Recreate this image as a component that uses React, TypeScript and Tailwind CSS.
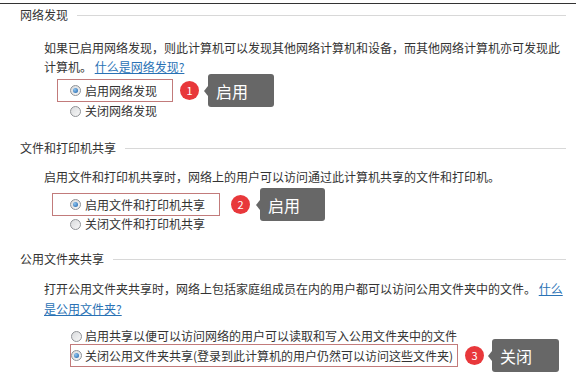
import React from 'react';

const Radio: React.FC<{ checked?: boolean }> = ({ checked = false }) => (
  <span className="relative inline-flex h-[11px] w-[11px] shrink-0 items-center justify-center rounded-full border border-[#8f9296] bg-[linear-gradient(135deg,#d9dbdd,#f7f7f7)]">
    {checked && (
      <span className="h-[5px] w-[5px] rounded-full bg-[radial-gradient(circle_at_35%_35%,#8cc4f0,#1c5fa6)]" />
    )}
  </span>
);

const Heading: React.FC<{ title: string }> = ({ title }) => (
  <div className="flex h-5 items-center pl-5 pr-[10px]">
    <span className="leading-5">{title}</span>
    <div className="ml-[9px] h-px flex-1 bg-[#d8d8d8]" />
  </div>
);

const Badge: React.FC<{ n: number; className?: string }> = ({ n, className = '' }) => (
  <span
    className={`flex h-[19px] w-[19px] shrink-0 items-center justify-center rounded-full bg-[#e8383b] text-[11px] leading-none text-white ${className}`}
  >
    {n}
  </span>
);

const Tip: React.FC<{ text: string; width: string; className?: string }> = ({ text, width, className = '' }) => (
  <div className={`flex shrink-0 items-center ${className}`}>
    <span className="h-0 w-0 border-y-[5px] border-r-[4px] border-y-transparent border-r-[#676767]" />
    <div className={`flex h-[33px] ${width} items-center rounded-[3px] bg-[#676767] pl-[8px] text-[16px] text-white`}>
      {text}
    </div>
  </div>
);

export default function App() {
  return (
    <div className="h-[378px] w-[576px] overflow-hidden bg-white font-['Noto_Sans_CJK_SC',sans-serif] text-[12px] text-[#333]">
      <div className="mt-[3px] h-px bg-[#333]" />

      {/* 网络发现 */}
      <div className="mt-px">
        <Heading title="网络发现" />
      </div>
      <p className="mt-[13px] whitespace-nowrap pl-[44px] leading-[19px]">
        如果已启用网络发现，则此计算机可以发现其他网络计算机和设备，而其他网络计算机亦可发现此
        <br />
        计算机。 <span className="text-[#2a72b5] underline">什么是网络发现?</span>
      </p>
      <div className="mt-[3px] flex h-[23px] items-center">
        <div className="ml-[57px] flex h-full w-[116px] items-center border border-[#c27b7b] pl-[12px]">
          <Radio checked />
          <span className="ml-[4px]">启用网络发现</span>
        </div>
        <Badge n={1} className="ml-[7px]" />
        <Tip text="启用" width="w-[66px]" className="ml-[5px]" />
      </div>
      <div className="flex h-[18px] items-center pl-[70px]">
        <Radio />
        <span className="ml-[4px]">关闭网络发现</span>
      </div>

      {/* 文件和打印机共享 */}
      <div className="mt-[18px]">
        <Heading title="文件和打印机共享" />
      </div>
      <p className="mt-[9px] whitespace-nowrap pl-[44px] leading-[19px]">
        启用文件和打印机共享时，网络上的用户可以访问通过此计算机共享的文件和打印机。
      </p>
      <div className="mt-[7px] flex h-[23px] items-center">
        <div className="ml-[52px] flex h-full w-[168px] items-center border border-[#c27b7b] pl-[17px]">
          <Radio checked />
          <span className="ml-[4px]">启用文件和打印机共享</span>
        </div>
        <Badge n={2} className="ml-[11px]" />
        <Tip text="启用" width="w-[65px]" className="ml-[6px]" />
      </div>
      <div className="flex h-[16px] items-center pl-[70px]">
        <Radio />
        <span className="ml-[4px]">关闭文件和打印机共享</span>
      </div>

      {/* 公用文件夹共享 */}
      <div className="mt-[17px]">
        <Heading title="公用文件夹共享" />
      </div>
      <p className="mt-[10px] whitespace-nowrap pl-[44px] leading-[20px]">
        打开公用文件夹共享时，网络上包括家庭组成员在内的用户都可以访问公用文件夹中的文件。{' '}
        <span className="text-[#2a72b5] underline">什么</span>
        <br />
        <span className="text-[#2a72b5] underline">是公用文件夹?</span>
      </p>
      <div className="mt-[9px] flex h-[16px] items-center pl-[71px]">
        <Radio />
        <span className="ml-[3px]">启用共享以便可以访问网络的用户可以读取和写入公用文件夹中的文件</span>
      </div>
      <div className="flex h-[23px] items-center">
        <div className="ml-[70px] flex h-full w-[388px] items-center border border-[#c27b7b]">
          <Radio checked />
          <span className="ml-[3px] whitespace-nowrap">关闭公用文件夹共享(登录到此计算机的用户仍然可以访问这些文件夹)</span>
        </div>
        <Badge n={3} className="ml-[7px]" />
        <Tip text="关闭" width="w-[67px]" className="ml-[4px]" />
      </div>
    </div>
  );
}
